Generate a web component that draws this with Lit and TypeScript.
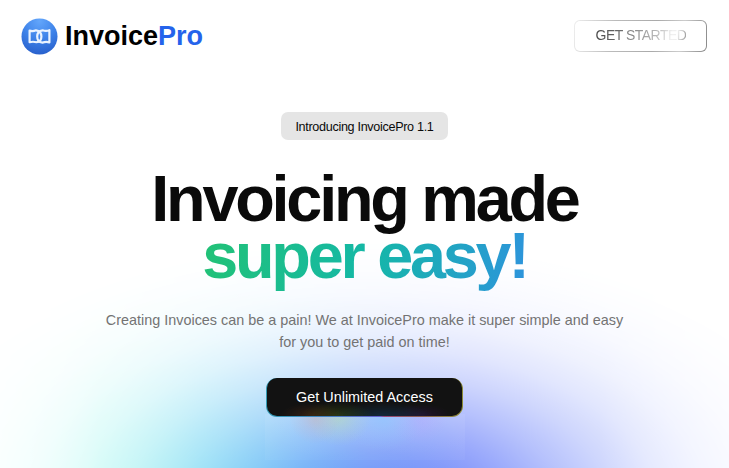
import { LitElement, html, css } from "lit";
import { customElement } from "lit/decorators.js";

@customElement("app-logo")
class AppLogo extends LitElement {
  static styles = css`
    :host { display: flex; align-items: center; gap: 7px; }
    svg { display: block; width: 37px; height: 37px; }
    .name { font-size: 27px; line-height: 36px; font-weight: 700; color: #000; }
    .accent { color: #2563eb; }
  `;
  render() {
    return html`
      <svg viewBox="0 0 37 37" fill="none">
        <defs>
          <radialGradient id="disc" cx="18.5" cy="3" r="34" gradientUnits="userSpaceOnUse">
            <stop stop-color="#63a6fb" /><stop offset=".5" stop-color="#3f84ea" /><stop offset="1" stop-color="#2860cc" />
          </radialGradient>
        </defs>
        <circle cx="18.5" cy="18.5" r="18" fill="url(#disc)" />
        <g stroke="#eaf3ff" stroke-width="2.2" stroke-linejoin="round">
          <path d="M8.6 12.6 C10.4 13.2 12.6 13.3 15 12.3 C18.8 12.8 20.4 15 20.4 18.6 C20.4 22 18.8 24 15.6 24.2 C13 23.6 10.8 23.6 8.6 24.2 Z" />
          <path d="M28.4 12.2 C26.4 13 24 13.1 21.6 12.3 C18 12.8 16.2 15 16.2 18.6 C16.2 22 17.8 24.4 21.4 24.6 C24 23.7 26.2 23.7 28.4 24.4 Z" />
        </g>
      </svg>
      <span class="name">Invoice<span class="accent">Pro</span></span>
    `;
  }
}

@customElement("app-root")
class AppRoot extends LitElement {
  static styles = css`
    :host {
      display: block; position: relative; height: 468px; overflow: hidden;
      background: #fff; font-family: "Liberation Sans", Arial, sans-serif;
    }
    * { box-sizing: border-box; }
    .glow {
      position: absolute; inset: 0;
      --falloff: radial-gradient(ellipse 485px 264px at 368px 505px, #000 0, rgba(0,0,0,.956) 10%, rgba(0,0,0,.835) 20%, rgba(0,0,0,.667) 30%, rgba(0,0,0,.487) 40%, rgba(0,0,0,.325) 50%, rgba(0,0,0,.195) 60%, rgba(0,0,0,.105) 70%, rgba(0,0,0,.05) 80%, rgba(0,0,0,.018) 90%, transparent 100%);
      background: linear-gradient(90deg, #a8fff6 0, #58eee2 100px, #54ccf0 200px, #62aaf7 300px, #6c96f8 368px, #687ffa 470px, #6880f9 600px, #a0b0ff 729px);
      -webkit-mask-image: var(--falloff);
      mask-image: var(--falloff);
    }
    .page { position: relative; display: flex; flex-direction: column; }
    header { display: flex; justify-content: space-between; align-items: center; height: 72px; padding: 0 22px 0 21px; }
    .start {
      width: 133px; height: 32px; border-radius: 6px; padding: 1px;
      background: linear-gradient(100deg, #eee 0, #bbb 30%, #aaa 60%, #ccc 80%, #888 100%);
    }
    .start-face { display: flex; align-items: center; justify-content: center; height: 100%; border-radius: 5px; background: #fff; padding-bottom: 2px; }
    .start-text {
      font-size: 14px; line-height: 20px; letter-spacing: -.5px; white-space: nowrap; padding-left: 1px;
      background: linear-gradient(100deg, #444 0, #666 25%, #999 50%, #bbb 68%, #f0f0f0 83%, #eee 89%, #aaa 97%, #999 100%);
      -webkit-background-clip: text; background-clip: text; color: transparent;
    }
    main { display: flex; flex-direction: column; align-items: center; padding-top: 40px; }
    .pill { width: 167px; height: 28px; border-radius: 7px; background: #e5e5e5; color: #0a0a0a; font-size: 12.6px; letter-spacing: -.025em; line-height: 30px; text-align: center; white-space: nowrap; }
    h1 { margin: 30px 0 0; font-size: 64.8px; line-height: 57px; font-weight: 700; letter-spacing: -.05em; color: #0a0a0a; text-align: center; white-space: nowrap; }
    .line { display: block; }
    .easy {
      width: fit-content; margin: 0 auto; padding-bottom: 12px;
      background: linear-gradient(100deg, #22c275 0, #14b8a6 50%, #2e93dd 100%);
      -webkit-background-clip: text; background-clip: text; color: transparent;
    }
    p { margin: 13px 0 0; font-size: 14.4px; line-height: 22px; color: #737373; text-align: center; white-space: nowrap; }
    .cta { position: relative; width: 197px; height: 39px; margin-top: 25px; }
    .halo {
      position: absolute; left: -1px; right: -2px; top: 36px; height: 46px;
      background:
        radial-gradient(ellipse 26px 26px at 50px 4px, rgba(205,170,175,.4), rgba(205,170,175,.16) 50%, transparent),
        radial-gradient(ellipse 32px 28px at 74px 4px, rgba(180,220,175,.5), rgba(180,220,175,.2) 50%, transparent),
        radial-gradient(ellipse 42px 32px at 118px 4px, rgba(140,200,255,.6), rgba(140,200,255,.25) 50%, transparent),
        radial-gradient(ellipse 30px 26px at 153px 4px, rgba(180,165,255,.45), rgba(180,165,255,.18) 50%, transparent),
        linear-gradient(rgba(255,255,255,.07), rgba(255,255,255,.03));
    }
    .button {
      position: relative; display: flex; height: 100%; border-radius: 11px; padding: 0 .6px 1.5px;
      background: linear-gradient(90deg, #349cb4 0, #3d87c0 25%, #6560cc 58%, #9c4878 60%, #87624f 80%, #8c8c35 100%);
    }
    .face {
      flex: 1; display: flex; align-items: center; justify-content: center; border-radius: 10px; color: #fff; font-size: 14.4px; white-space: nowrap;
      background:
        radial-gradient(ellipse 32px 13px at 45px 100%, rgba(120,55,20,.34), transparent),
        radial-gradient(ellipse 36px 14px at 70px 100%, rgba(70,110,15,.38), transparent),
        radial-gradient(ellipse 50px 14px at 116px 100%, rgba(20,70,110,.42), transparent),
        radial-gradient(ellipse 30px 12px at 154px 100%, rgba(60,20,90,.38), transparent),
        #121212;
    }
  `;
  render() {
    return html`
      <div class="glow"></div>
      <div class="page">
        <header>
          <app-logo></app-logo>
          <div class="start"><div class="start-face"><span class="start-text">GET STARTED</span></div></div>
        </header>
        <main>
          <div class="pill">Introducing InvoicePro 1.1</div>
          <h1><span class="line">Invoicing made</span><span class="line easy">super easy!</span></h1>
          <p>Creating Invoices can be a pain! We at InvoicePro make it super simple and easy<br />for you to get paid on time!</p>
          <div class="cta">
            <div class="halo"></div>
            <div class="button"><div class="face">Get Unlimited Access</div></div>
          </div>
        </main>
      </div>
    `;
  }
}
